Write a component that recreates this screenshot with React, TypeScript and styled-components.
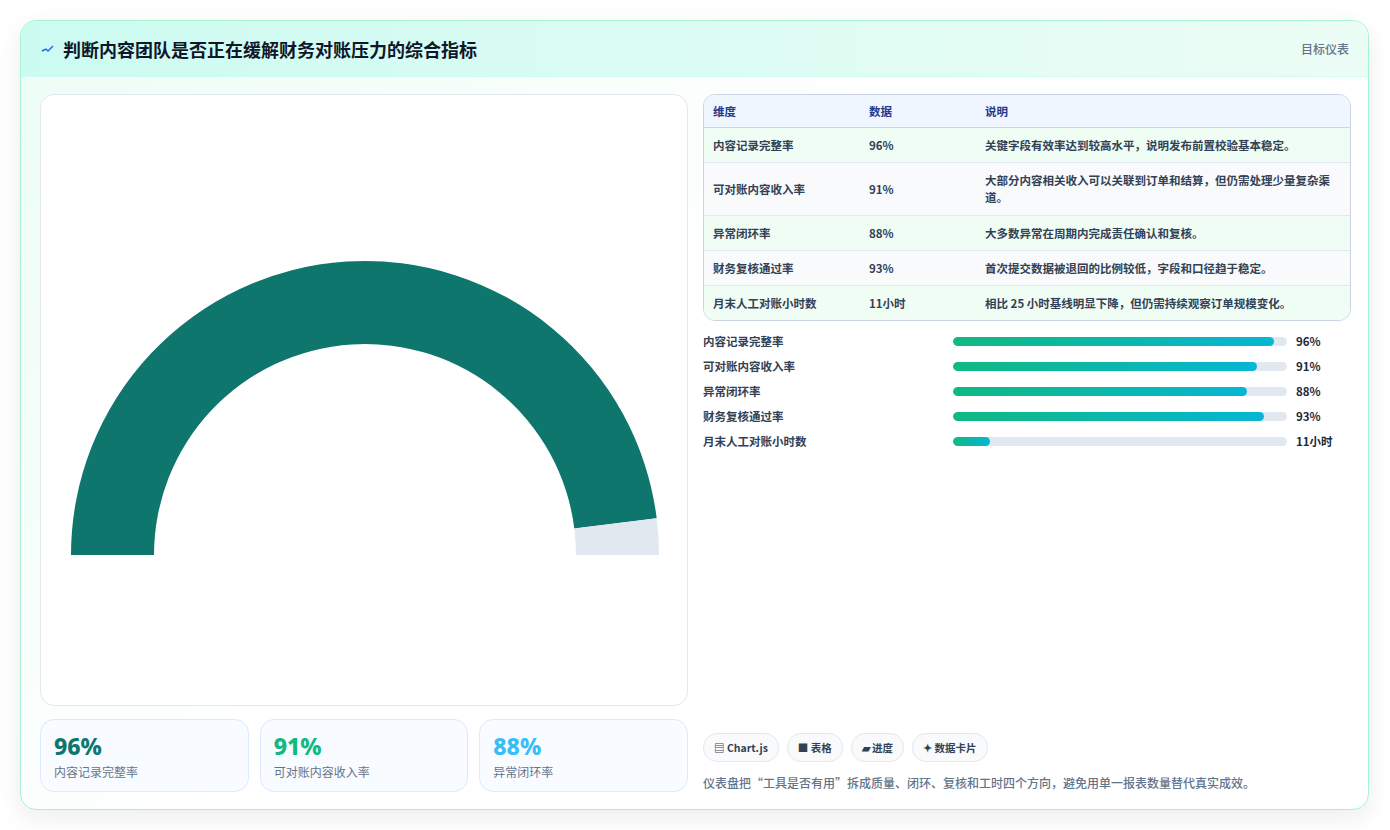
import React from 'react';
import styled, { createGlobalStyle } from 'styled-components';

const Global = createGlobalStyle`
  html, body { margin: 0; background: #f3f4f6; }
  body { font-family: "Noto Sans CJK SC", "Noto Sans", sans-serif; color: #1e293b; }
`;

const Page = styled.div`
  width: 1390px;
  height: 830px;
  background: #fff;
  padding: 20px 21px 22px 20px;
  box-sizing: border-box;
`;

const Card = styled.div`
  height: 788px;
  border: 1px solid #a7f3d0;
  border-radius: 16px;
  overflow: hidden;
  background: linear-gradient(135deg, #ecfdf5 0%, #ffffff 45%, #ffffff 100%);
  box-shadow: 0 8px 24px rgba(15, 23, 42, 0.08);
  display: flex;
  flex-direction: column;
`;

const Header = styled.div`
  height: 55px;
  flex: none;
  display: flex;
  align-items: center;
  justify-content: space-between;
  padding: 0 19px 0 20px;
  background: linear-gradient(90deg, #ccfbf1 0%, #ecfdf5 100%);
  border-bottom: 1px solid #ccfbf1;
`;

const Title = styled.h1`
  margin: 0;
  font-size: 18px;
  font-weight: 700;
  color: #0f172a;
  display: flex;
  align-items: center;
  gap: 8px;
`;

const HeaderTag = styled.span`
  font-size: 12px;
  font-weight: 500;
  color: #64748b;
`;

const Body = styled.div`
  flex: 1;
  display: grid;
  grid-template-columns: 648px 648px;
  gap: 15px;
  padding: 17px 18px 17px 19px;
  min-height: 0;
`;

const Column = styled.div`
  display: flex;
  flex-direction: column;
  min-height: 0;
`;

const GaugePanel = styled.div`
  height: 611px;
  background: #fff;
  border: 1px solid #e2e8f0;
  border-radius: 14px;
  display: flex;
  align-items: flex-start;
  justify-content: center;
`;

const Stats = styled.div`
  margin-top: 13px;
  display: grid;
  grid-template-columns: repeat(3, 1fr);
  gap: 11px;
`;

const Stat = styled.div`
  height: 73px;
  box-sizing: border-box;
  border: 1px solid #dbeafe;
  border-radius: 14px;
  background: #f8fbff;
  padding: 11px 13px;
`;

const StatValue = styled.div<{ $color: string }>`
  font-size: 23px;
  font-weight: 800;
  color: ${p => p.$color};
  line-height: 30px;
  font-family: "Noto Sans", sans-serif;
`;

const StatLabel = styled.div`
  font-size: 12px;
  color: #64748b;
  margin-top: 2px;
`;

const Table = styled.table`
  width: 100%;
  border-collapse: separate;
  border-spacing: 0;
  border: 1px solid #cbd5e1;
  border-radius: 12px;
  overflow: hidden;
  font-size: 11.5px;
  font-weight: 600;
  th, td { text-align: left; padding: 0 9px; border-bottom: 1px solid #e2e8f0; vertical-align: middle; }
  tr:last-child td { border-bottom: none; }
  th { background: #eff6ff; color: #1e3a8a; height: 32px; border-bottom: 1px solid #cbd5e1; }
  td { color: #334155; height: 34px; line-height: 17px; }
  tbody tr:nth-child(odd) td { background: #f0fdf4; }
  tbody tr:nth-child(even) td { background: #f8fafc; }
`;

const Bars = styled.div`
  margin-top: 12px;
  display: flex;
  flex-direction: column;
  gap: 9px;
`;

const BarRow = styled.div`
  display: grid;
  grid-template-columns: 241px 334px auto;
  align-items: center;
  column-gap: 9px;
  height: 16px;
  font-size: 11.5px;
  font-weight: 600;
  color: #334155;
`;

const Track = styled.div`
  height: 9px;
  background: #e2e8f0;
  border-radius: 5px;
  overflow: hidden;
`;

const Fill = styled.div`
  height: 100%;
  border-radius: 5px;
  background: linear-gradient(90deg, #10b981, #06b6d4);
`;

const BarValue = styled.span`
  font-weight: 700;
  color: #1e293b;
`;

const Footer = styled.div`
  margin-top: auto;
  padding-bottom: 1px;
`;

const Chips = styled.div`
  display: flex;
  gap: 8px;
`;

const Chip = styled.span`
  height: 27px;
  padding: 0 10px;
  border: 1px solid #e2e8f0;
  border-radius: 14px;
  background: #f8fafc;
  display: inline-flex;
  align-items: center;
  gap: 4px;
  font-size: 10.5px;
  font-weight: 700;
  color: #334155;
`;

const Note = styled.p`
  margin: 12px 0 0;
  font-size: 12px;
  font-weight: 500;
  color: #64748b;
`;

const rows = [
  ['内容记录完整率', '96%', '关键字段有效率达到较高水平，说明发布前置校验基本稳定。'],
  ['可对账内容收入率', '91%', '大部分内容相关收入可以关联到订单和结算，但仍需处理少量复杂渠道。'],
  ['异常闭环率', '88%', '大多数异常在周期内完成责任确认和复核。'],
  ['财务复核通过率', '93%', '首次提交数据被退回的比例较低，字段和口径趋于稳定。'],
  ['月末人工对账小时数', '11小时', '相比 25 小时基线明显下降，但仍需持续观察订单规模变化。'],
];

const bars: [string, number, string][] = [
  ['内容记录完整率', 96, '96%'],
  ['可对账内容收入率', 91, '91%'],
  ['异常闭环率', 88, '88%'],
  ['财务复核通过率', 93, '93%'],
  ['月末人工对账小时数', 11, '11小时'],
];

function arcPath(cx: number, cy: number, r1: number, r2: number, a0: number, a1: number) {
  const p = (r: number, a: number) => [cx + r * Math.cos(a), cy - r * Math.sin(a)];
  const [x0, y0] = p(r2, a0);
  const [x1, y1] = p(r2, a1);
  const [x2, y2] = p(r1, a1);
  const [x3, y3] = p(r1, a0);
  return `M${x0} ${y0} A${r2} ${r2} 0 0 1 ${x1} ${y1} L${x2} ${y2} A${r1} ${r1} 0 0 0 ${x3} ${y3} Z`;
}

function Gauge({ value }: { value: number }) {
  const cx = 324, cy = 460, r1 = 211, r2 = 294;
  const split = Math.PI * (1 - value / 100);
  return (
    <svg width="646" height="560" viewBox="0 0 646 560">
      <path d={arcPath(cx, cy, r1, r2, Math.PI, split)} fill="#0f766e" />
      <path d={arcPath(cx, cy, r1, r2, split, 0)} fill="#e2e8f0" />
    </svg>
  );
}

export default function App() {
  return (
    <>
      <Global />
      <Page>
        <Card>
          <Header>
            <Title>
              <svg width="14" height="10" viewBox="0 0 14 10">
                <path d="M1 7 L5 5 L7 7 L12 2" stroke="#2563eb" strokeWidth="1.4" fill="none" />
              </svg>
              判断内容团队是否正在缓解财务对账压力的综合指标
            </Title>
            <HeaderTag>目标仪表</HeaderTag>
          </Header>
          <Body>
            <Column>
              <GaugePanel>
                <Gauge value={96} />
              </GaugePanel>
              <Stats>
                <Stat><StatValue $color="#0f766e">96%</StatValue><StatLabel>内容记录完整率</StatLabel></Stat>
                <Stat><StatValue $color="#10b981">91%</StatValue><StatLabel>可对账内容收入率</StatLabel></Stat>
                <Stat><StatValue $color="#38bdf8">88%</StatValue><StatLabel>异常闭环率</StatLabel></Stat>
              </Stats>
            </Column>
            <Column>
              <Table>
                <colgroup>
                  <col style={{ width: 156 }} />
                  <col style={{ width: 116 }} />
                  <col />
                </colgroup>
                <thead>
                  <tr><th>维度</th><th>数据</th><th>说明</th></tr>
                </thead>
                <tbody>
                  {rows.map(r => (
                    <tr key={r[0]} style={r[0] === '可对账内容收入率' ? { height: 53 } : undefined}>
                      <td>{r[0]}</td><td>{r[1]}</td><td>{r[2]}</td>
                    </tr>
                  ))}
                </tbody>
              </Table>
              <Bars>
                {bars.map(([label, v, text]) => (
                  <BarRow key={label}>
                    <span>{label}</span>
                    <Track><Fill style={{ width: `${v}%` }} /></Track>
                    <BarValue>{text}</BarValue>
                  </BarRow>
                ))}
              </Bars>
              <Footer>
                <Chips>
                  <Chip>▤ Chart.js</Chip>
                  <Chip>■ 表格</Chip>
                  <Chip>▰ 进度</Chip>
                  <Chip>✦ 数据卡片</Chip>
                </Chips>
                <Note>仪表盘把“工具是否有用”拆成质量、闭环、复核和工时四个方向，避免用单一报表数量替代真实成效。</Note>
              </Footer>
            </Column>
          </Body>
        </Card>
      </Page>
    </>
  );
}
